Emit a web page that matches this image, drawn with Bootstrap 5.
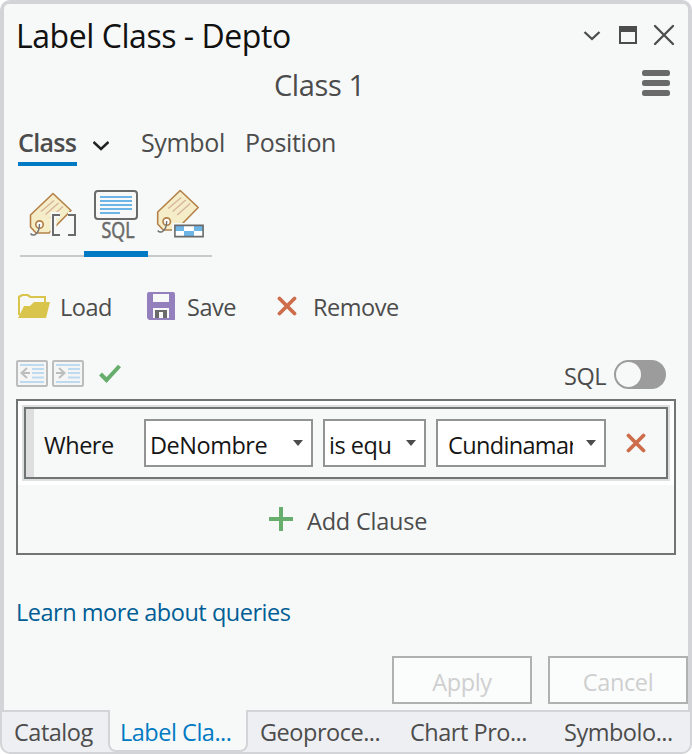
<!DOCTYPE html>
<html lang="en">
<head>
<meta charset="utf-8">
<title>Label Class - Depto</title>
<link href="https://cdn.jsdelivr.net/npm/bootstrap@5.3.0/dist/css/bootstrap.min.css" rel="stylesheet">
<style>
body{width:692px;height:754px;overflow:hidden;background:#fff;color:#4c4c4c;font:23.5px/32px "Open Sans","Noto Sans",sans-serif;letter-spacing:-.48px}
svg{display:block;flex:none}
.pane{width:692px;height:754px;padding-top:4px;background:#d2d4d7;border-radius:10px}
.pane-body{margin:0 4px;height:706px;background:#f7f9f8;border-radius:5px 5px 0 0}
.title-row{height:58px;padding:3px 12px 0 12px}
.pane-title{font-size:32px;line-height:40px;padding-top:2px;color:#111;letter-spacing:-.45px}
.class-row{height:46px;padding:0 18px 4px 270px}
.class-name{font-size:29px;line-height:40px;padding-top:3px;letter-spacing:-.4px}
.main-tabs{height:58px;padding-left:14px;font-size:25px;letter-spacing:-.35px}
.main-tabs .tab-on{font-weight:600;width:59px;height:40px;border-bottom:4px solid #007ac2;white-space:nowrap;letter-spacing:-.7px}
.sym{height:40px;width:104px;margin-left:32px}
.pos{height:40px}
.view-tabs{height:91px;padding-left:16px}
.view-tabs>div{width:64px;border-bottom:2px solid #c8c9c9}
.view-tabs>.view-on{border-bottom:6px solid #007ac2}
.file-row{height:101px;padding:0 0 3px 14px}
.load{width:87px;margin-left:10px}
.save{width:90px;margin-left:12px}
.remove{margin-left:16px}
.file-row span{padding-top:1px}
.edit-row{height:41px;padding:0 22px 0 12px}
.sql-label{padding-top:2px;width:50px}
.toggle{width:52px;height:29px;margin-top:2px;border-radius:15px;background:#9c9c9c;padding:2px}
.toggle span{display:block;width:25px;height:25px;border-radius:50%;background:#f7f9f8}
.query{height:156px;margin:0 12px;border:2px solid #717474}
.clause-wrap{height:84px;background:#fff;padding:4px}
.clause-edge{height:76px;border:2px solid #dedfdf}
.clause{height:72px;border:2px solid #717474;background:#f7f9f8;color:#151515}
.grip{width:8px;background:#dedede}
.where{width:110px;padding:3px 0 0 10px}
.pick{height:48px;border:2px solid #929494;background:#fff;padding:3px 8px 0 4px}
.pick .val{overflow:hidden;white-space:nowrap}
.p1{width:169px}
.p2{width:103px;margin:0 10px}
.p3{width:170px;padding-left:10px}
.p3 .val{width:125px;letter-spacing:-.65px}
.drop{margin-left:20px}
.add-row{height:68px;padding-left:251px}
.add{margin-left:14px;padding-top:3px;letter-spacing:-.2px}
.learn-row{padding:41px 0 0 12px}
.learn{color:#005e95;text-decoration:none;letter-spacing:-.47px}
.foot{padding-bottom:6px}
.btn.plain{width:140px;height:48px;border:2px solid #b0b2b2;border-radius:0;background:#fbfdfc;color:#cfcfd0;font-size:23.5px;line-height:32px;padding:3px 0 0;opacity:1;letter-spacing:-.35px}
.dock{height:42px;margin:0 2px;background:#eeeff2;border-radius:0 0 8px 8px}
.dock>div{border-top:2px solid #d2d4d7;padding-top:4px;height:42px;white-space:nowrap}
.dock>.dock-on{border:2px solid #d2d4d7;border-top:0;border-radius:0 0 8px 8px;background:#f7f9f8;color:#007ac2;padding-top:6px}
.d1{width:106px;padding-left:12px}
.dock-on{width:140px;padding-left:10px}
.d3{width:148px;padding-left:12px}
.d4{width:154px;padding-left:14px}
.d5{padding-left:14px;border-bottom-right-radius:8px}
</style>
<script src="https://cdn.jsdelivr.net/npm/bootstrap@5.3.0/dist/js/bootstrap.bundle.min.js"></script>
</head>
<body>
<div class="pane">
 <main class="pane-body d-flex flex-column">
  <header class="title-row d-flex align-items-center">
   <div class="pane-title me-auto">Label Class - Depto</div>
   <svg width="94" height="24" viewBox="582 22 94 24" fill="none" stroke="#4c4c4c" stroke-width="2.3"><path d="M584.5 31l7.5 7 7.5-7"/><path d="M620 26h16v16h-16z" stroke-width="2"/><path d="M619 25h18v6h-18z" fill="#4c4c4c" stroke="none"/><path d="M655 25l18 18M673 25l-18 18" stroke-linecap="round"/></svg>
  </header>
  <div class="class-row d-flex justify-content-between align-items-center">
   <div class="class-name">Class 1</div>
   <svg width="28" height="28" viewBox="0 0 28 28" fill="#6a6a6a"><rect y="1" width="28" height="6" rx="2.5"/><rect y="11" width="28" height="6" rx="2.5"/><rect y="21" width="28" height="6" rx="2.5"/></svg>
  </div>
  <nav class="main-tabs d-flex align-items-end">
   <div class="tab-on">Class</div>
   <svg class="ms-3" width="16" height="36" viewBox="93 130 16 36" fill="none" stroke="#222" stroke-width="2.5"><path d="M93.500 142l7.500 7 7.500-7"/></svg>
   <div class="sym">Symbol</div>
   <div class="pos">Position</div>
  </nav>
  <div class="view-tabs d-flex">
   <div>
    <svg width="64" height="89" viewBox="20 166 64 89"><g id="tag"><path d="M53 193.5L71 210.500 49 233H36L30.500 227V215z" fill="#f4edc7" stroke="#b48149" stroke-width="1.6" stroke-linejoin="round"/><path d="M41 211.500l13-11M45.500 214.500l13-11.500M50 218l13-11.500" stroke="#d7b49b" stroke-width="1.3"/><circle cx="39.500" cy="224.500" r="3.700" fill="#fff" stroke="#b48149" stroke-width="1.7"/><path d="M39.500 224c0 4-.5 8-4 10.300-2 1.200-4 .5-5-.8" fill="none" stroke="#717474" stroke-width="1.400"/></g><path d="M60 215h-6.500v20H60M68 215h7v20h-7" fill="none" stroke="#f7f9f8" stroke-width="6"/><path d="M60 215h-7v20h7M68 215h7v20h-7" fill="none" stroke="#6a6a6a" stroke-width="2"/></svg>
   </div>
   <div class="view-on">
    <svg width="64" height="85" viewBox="84 166 64 85"><rect x="95" y="191" width="42" height="28" rx="3" fill="#f8f8f8" stroke="#6a6a6a" stroke-width="2"/><path d="M100 197h32M100 201h32M100 205h32M100 209h32M100 213h20" stroke="#6cb5e6" stroke-width="1.900"/><text x="101.500" y="237.500" font-size="21" textLength="33" lengthAdjust="spacingAndGlyphs" fill="#6a6a6a" stroke="#6a6a6a" stroke-width=".6" style="letter-spacing:0">SQL</text></svg>
   </div>
   <div>
    <svg width="64" height="89" viewBox="148 166 64 89"><use href="#tag" x="127.200" y="-3"/><path d="M172 223h34v16h-34z" fill="#f7f9f8"/><path d="M175 225h28v11h-28z" fill="#fff"/><path d="M175 226h9v5h-9zM194 226h9v5h-9zM184 231h10v5h-10z" fill="#6cb5e6"/><path d="M174.900 225.400h28.200v11.200h-28.200z" fill="none" stroke="#6a6a6a" stroke-width="1.600"/></svg>
   </div>
  </div>
  <div class="file-row d-flex align-items-center">
   <svg width="32" height="26" viewBox="18 293 32 26" fill="#d9c44c"><path d="M18 296l4-2h6l3 2h15v6h-2v-4H30l-3-2h-4l-3 1.500V315h-2z"/><path d="M24 306h6l4-4h16l-4 16H18z"/></svg>
   <span class="load">Load</span>
   <svg width="28" height="28" viewBox="0 0 28 28"><path d="M0 2q0-2 2-2h24q2 0 2 2v26H2l-2-2z" fill="#9380bd"/><path d="M6 2h16v8H6z" fill="#f7f9f8"/><path d="M6 16h16v10H6z" fill="#f7f9f8"/><path d="M8 18h12v8h-4v-6h-4v6H8z" fill="#6a6a6a"/></svg>
   <span class="save">Save</span>
   <svg width="20" height="20" viewBox="0 0 20 20"><path id="xmark" d="M2.500 2.500l15 15M17.500 2.500l-15 15" stroke="#cd6d4c" stroke-width="3.800" stroke-linecap="round"/></svg>
   <span class="remove">Remove</span>
  </div>
  <div class="edit-row d-flex">
   <svg width="110" height="41" viewBox="16 358 110 41" fill="none"><g id="outdent"><rect x="17" y="361" width="30" height="25" rx="1" fill="#f5f5f5" stroke="#bcbebe" stroke-width="2"/><path d="M20 365h24M32 369h12M32 373h12M32 377.500h12M20 382h24" stroke="#bcdaf0" stroke-width="2"/></g><path d="M30 373H21.500M27 368l-5.500 5 5.500 5" stroke="#bcbebe" stroke-width="2"/><use href="#outdent" x="36"/><path d="M56 373h8.500M59 368l5.500 5-5.500 5" stroke="#bcbebe" stroke-width="2"/><path d="M100.500 374l6 6 13-14" stroke="#67ad6c" stroke-width="4"/></svg>
   <span class="sql-label ms-auto">SQL</span>
   <div class="toggle"><span></span></div>
  </div>
  <section class="query">
   <div class="clause-wrap"><div class="clause-edge"><div class="clause d-flex">
    <div class="grip"></div>
    <div class="d-flex align-items-center flex-grow-1">
     <div class="where">Where</div>
     <div class="pick d-flex align-items-center p1"><span class="val flex-grow-1">DeNombre</span><svg width="10" height="11" viewBox="0 0 10 11"><path d="M0 1h10L5 7z" fill="#4c4c4c"/></svg></div>
     <div class="pick d-flex align-items-center p2"><span class="val flex-grow-1">is equ</span><svg width="10" height="11" viewBox="0 0 10 11"><path d="M0 1h10L5 7z" fill="#4c4c4c"/></svg></div>
     <div class="pick d-flex align-items-center p3"><span class="val">Cundinamar</span><svg class="ms-auto" width="10" height="11" viewBox="0 0 10 11"><path d="M0 1h10L5 7z" fill="#4c4c4c"/></svg></div>
     <svg class="drop" width="20" height="20" viewBox="0 0 20 20"><use href="#xmark"/></svg>
    </div>
   </div></div></div>
   <div class="add-row d-flex align-items-center">
    <svg width="24" height="24" viewBox="0 0 24 24"><path d="M12 0v24M0 12h24" stroke="#67ad6c" stroke-width="4"/></svg>
    <span class="add">Add Clause</span>
   </div>
  </section>
  <div class="learn-row"><a class="learn" href="#">Learn more about queries</a></div>
  <div class="d-flex justify-content-end gap-3 mt-auto foot">
   <button class="btn plain" disabled>Apply</button>
   <button class="btn plain" disabled>Cancel</button>
  </div>
 </main>
 <nav class="dock d-flex">
  <div class="d1">Catalog</div>
  <div class="dock-on">Label Cla...</div>
  <div class="d3">Geoproce...</div>
  <div class="d4">Chart Pro...</div>
  <div class="d5 flex-grow-1">Symbolo...</div>
 </nav>
</div>
</body>
</html>
